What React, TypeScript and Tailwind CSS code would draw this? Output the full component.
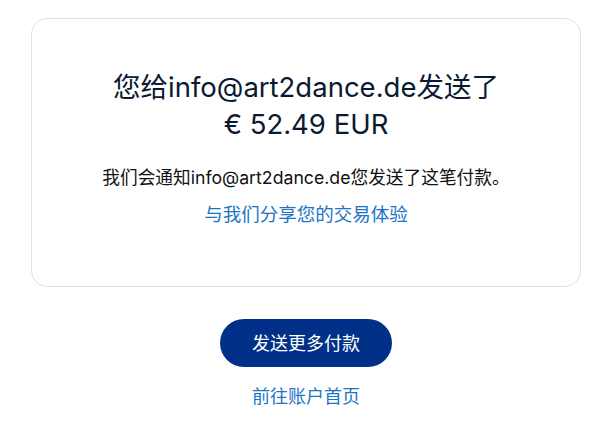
export default function App() {
  return (
    <div
      className="min-h-screen bg-white pt-[18px]"
      style={{ fontFamily: 'Inter, "Noto Sans CJK SC", sans-serif' }}
    >
      <div className="ml-[31px] w-[550px]">
        <div className="h-[269px] rounded-[16px] border border-[#e2e2e2] flex flex-col items-center pt-[50px]">
          <h1 className="text-[27.5px] leading-[37px] text-[#0b1a33] text-center font-normal">
            您给info@art2dance.de发送了
            <br />€ 52.49 EUR
          </h1>
          <p className="mt-[22px] text-[17.7px] leading-[26px] text-[#111]">
            我们会通知info@art2dance.de您发送了这笔付款。
          </p>
          <a className="mt-[10px] text-[18.5px] leading-[26px] text-[#1c74c4]">与我们分享您的交易体验</a>
        </div>
        <div className="flex flex-col items-center mt-[32px]">
          <button className="w-[172px] h-[48px] rounded-full bg-[#003087] text-white text-[18px]">
            发送更多付款
          </button>
          <a className="mt-[17px] text-[18px] leading-[26px] text-[#1c74c4]">前往账户首页</a>
        </div>
      </div>
    </div>
  );
}
